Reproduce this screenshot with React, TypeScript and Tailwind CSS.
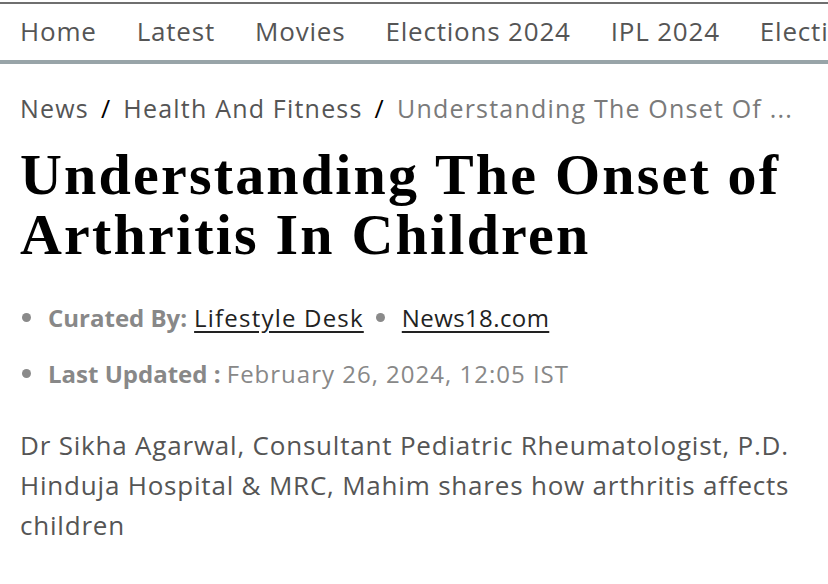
import React from "react";

const navItems = ["Home", "Latest", "Movies", "Elections 2024", "IPL 2024", "Elections"];

const Bullet: React.FC = () => (
  <span className="inline-block w-[9px] h-[9px] rounded-full bg-[#8a8a8a] shrink-0" />
);

const App: React.FC = () => {
  return (
    <div className="w-[828px] h-[584px] overflow-hidden bg-white font-['Open_Sans',sans-serif]">
      {/* top nav */}
      <div className="border-t-[2px] border-[#6f6f6f] mt-[2px]">
        <nav className="flex items-center gap-[40px] pl-[20px] pb-[2px] h-[60px] overflow-hidden whitespace-nowrap text-[26px] tracking-[0.8px] text-[#555] border-b-[4px] border-[#98a4a8]">
          {navItems.map((item) => (
            <a key={item} href="#" className="shrink-0">
              {item}
            </a>
          ))}
        </nav>
      </div>

      <main className="px-[20px]">
        {/* breadcrumb */}
        <div className="flex items-center mt-[26px] text-[25px] tracking-[1.2px] whitespace-nowrap">
          <a href="#" className="text-[#555]">News</a>
          <span className="mx-[12px] text-black">/</span>
          <a href="#" className="text-[#555]">Health And Fitness</a>
          <span className="mx-[12px] text-black">/</span>
          <span className="text-[#7a7a7a]">Understanding The Onset Of ...</span>
        </div>

        {/* headline */}
        <h1 className="mt-[17px] font-['Liberation_Serif',serif] font-bold text-[58px] leading-[60px] tracking-[2.2px] text-black">
          Understanding The Onset of Arthritis In Children
        </h1>

        {/* meta */}
        <ul className="mt-[38px] text-[24px]">
          <li className="flex items-center h-[30px] pl-[2px]">
            <Bullet />
            <span className="ml-[17px] font-bold text-[#888]">Curated By:</span>
            <a href="#" className="ml-[7px] tracking-[1.2px] underline underline-offset-4 text-[#222]">Lifestyle Desk</a>
            <span className="ml-[12px] flex"><Bullet /></span>
            <a href="#" className="ml-[17px] tracking-[0.4px] underline underline-offset-4 text-[#222]">News18.com</a>
          </li>
          <li className="flex items-center h-[30px] pl-[2px] mt-[26px]">
            <Bullet />
            <span className="ml-[17px] whitespace-nowrap">
              <span className="font-bold text-[#888]">Last Updated : </span>
              <span className="text-[#888] tracking-[1px]">February 26, 2024, 12:05 IST</span>
            </span>
          </li>
        </ul>

        {/* summary */}
        <p className="mt-[36px] text-[26px] leading-[40px] tracking-[0.8px] text-[#555]">
          Dr Sikha Agarwal, Consultant Pediatric Rheumatologist, P.D. Hinduja Hospital &amp; MRC, Mahim shares how arthritis affects children
        </p>
      </main>
    </div>
  );
};

export default App;
